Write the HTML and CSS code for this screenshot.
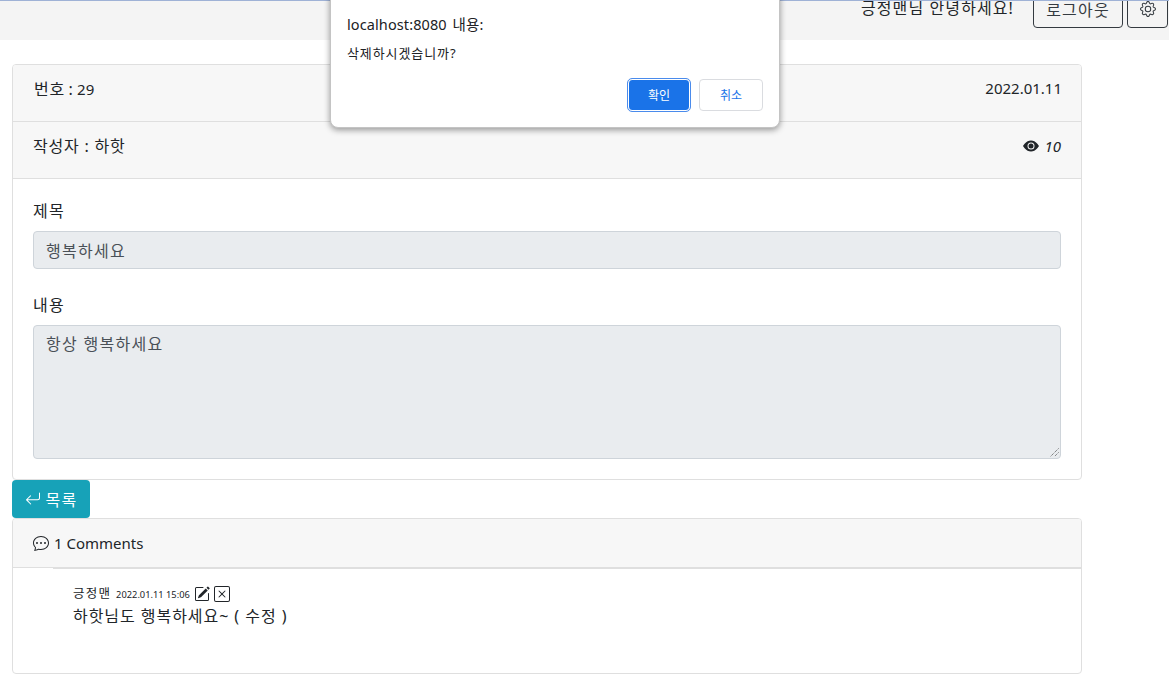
FILE: index.html
```html
<!DOCTYPE html>
<html lang="ko">
<head>
<meta charset="utf-8">
<title>게시글</title>
<link rel="stylesheet" href="styles.css">
</head>
<body>
<header class="topbar">
  <span class="greeting">긍정맨님 안녕하세요!</span>
  <button class="btn-outline logout">로그아웃</button>
  <button class="btn-outline gear">
    <svg class="icon" viewBox="0 0 16 16" width="16" height="16" fill="currentColor"><path d="M8 4.754a3.246 3.246 0 1 0 0 6.492 3.246 3.246 0 0 0 0-6.492zM5.754 8a2.246 2.246 0 1 1 4.492 0 2.246 2.246 0 0 1-4.492 0z"/><path d="M9.796 1.343c-.527-1.79-3.065-1.79-3.592 0l-.094.319a.873.873 0 0 1-1.255.52l-.292-.16c-1.64-.892-3.433.902-2.54 2.541l.159.292a.873.873 0 0 1-.52 1.255l-.319.094c-1.79.527-1.79 3.065 0 3.592l.319.094a.873.873 0 0 1 .52 1.255l-.16.292c-.892 1.64.901 3.434 2.541 2.54l.292-.159a.873.873 0 0 1 1.255.52l.094.319c.527 1.79 3.065 1.79 3.592 0l.094-.319a.873.873 0 0 1 1.255-.52l.292.16c1.64.893 3.434-.902 2.54-2.541l-.159-.292a.873.873 0 0 1 .52-1.255l.319-.094c1.79-.527 1.79-3.065 0-3.592l-.319-.094a.873.873 0 0 1-.52-1.255l.16-.292c.893-1.64-.902-3.433-2.541-2.54l-.292.159a.873.873 0 0 1-1.255-.52l-.094-.319zm-2.633.283c.246-.835 1.428-.835 1.674 0l.094.319a1.873 1.873 0 0 0 2.693 1.115l.291-.16c.764-.415 1.6.42 1.184 1.185l-.159.292a1.873 1.873 0 0 0 1.116 2.692l.318.094c.835.246.835 1.428 0 1.674l-.319.094a1.873 1.873 0 0 0-1.115 2.693l.16.291c.415.764-.42 1.6-1.185 1.184l-.291-.159a1.873 1.873 0 0 0-2.693 1.116l-.094.318c-.246.835-1.428.835-1.674 0l-.094-.319a1.873 1.873 0 0 0-2.692-1.115l-.292.16c-.764.415-1.6-.42-1.184-1.185l.159-.291A1.873 1.873 0 0 0 1.945 8.93l-.319-.094c-.835-.246-.835-1.428 0-1.674l.319-.094A1.873 1.873 0 0 0 3.06 4.377l-.16-.292c-.415-.764.42-1.6 1.185-1.184l.292.159a1.873 1.873 0 0 0 2.692-1.115l.094-.319z"/></svg>
  </button>
</header>

<main class="content">
  <section class="card">
    <div class="card-head">
      <span class="post-no">번호 : <span class="latin">29</span></span>
      <span class="latin date">2022.01.11</span>
    </div>
    <div class="card-head">
      <span>작성자 : 하핫</span>
      <span class="views">
        <svg class="icon" viewBox="0 0 16 16" width="16" height="16" fill="currentColor"><path d="M10.5 8a2.5 2.5 0 1 1-5 0 2.5 2.5 0 0 1 5 0z"/><path d="M0 8s3-5.5 8-5.5S16 8 16 8s-3 5.5-8 5.5S0 8 0 8zm8 3.5a3.5 3.5 0 1 0 0-7 3.5 3.5 0 0 0 0 7z"/></svg>
        <em class="latin">10</em>
      </span>
    </div>
    <div class="card-body">
      <label class="field-label">제목</label>
      <div class="field title-field">행복하세요</div>
      <label class="field-label second">내용</label>
      <div class="field text-field">항상 행복하세요
        <svg class="grip" viewBox="0 0 9 9" width="9" height="9"><path d="M8.5 0.5 0.5 8.5M8.5 4.5 4.5 8.5" stroke="#555" stroke-width="1" stroke-dasharray="1 1" fill="none"/></svg>
      </div>
    </div>
  </section>

  <button class="btn-list">
    <svg class="icon" viewBox="0 0 16 16" width="16" height="16" fill="currentColor"><path fill-rule="evenodd" d="M14.5 1.5a.5.5 0 0 1 .5.5v4.8a2.5 2.5 0 0 1-2.5 2.5H2.707l3.347 3.346a.5.5 0 0 1-.708.708l-4.2-4.2a.5.5 0 0 1 0-.708l4-4a.5.5 0 1 1 .708.708L2.707 8.3H12.5A1.5 1.5 0 0 0 14 6.8V2a.5.5 0 0 1 .5-.5z"/></svg>
    목록
  </button>

  <section class="card comments">
    <div class="comments-head">
      <svg class="icon" viewBox="0 0 16 16" width="16" height="16" fill="currentColor"><path d="M5 8a1 1 0 1 1-2 0 1 1 0 0 1 2 0zm4 0a1 1 0 1 1-2 0 1 1 0 0 1 2 0zm3 1a1 1 0 1 0 0-2 1 1 0 0 0 0 2z"/><path d="m2.165 15.803.02-.004c1.83-.363 2.948-.842 3.468-1.105A9.06 9.06 0 0 0 8 15c4.418 0 8-3.134 8-7s-3.582-7-8-7-8 3.134-8 7c0 1.76.743 3.37 1.97 4.6a10.437 10.437 0 0 1-.524 2.318l-.003.011a10.722 10.722 0 0 1-.244.637c-.079.186.074.394.273.362a21.673 21.673 0 0 0 .693-.125zm.8-3.108a1 1 0 0 0-.287-.801C1.618 10.83 1 9.468 1 8c0-3.192 3.004-6 7-6s7 2.808 7 6c0 3.193-3.004 6-7 6a8.06 8.06 0 0 1-2.088-.272 1 1 0 0 0-.711.074c-.387.196-1.24.57-2.634.893a10.97 10.97 0 0 0 .398-2z"/></svg>
      <span>1 Comments</span>
    </div>
    <div class="comment-list">
      <div class="comment">
        <div class="comment-meta">
          <span class="author">긍정맨</span>
          <span class="stamp">2022.01.11 15:06</span>
          <svg class="icon" viewBox="0 0 16 16" width="16" height="16" fill="currentColor"><path d="M15.502 1.94a.5.5 0 0 1 0 .706L14.459 3.69l-2-2L13.502.646a.5.5 0 0 1 .707 0l1.293 1.293zm-1.75 2.456-2-2L4.939 9.21a.5.5 0 0 0-.121.196l-.805 2.414a.25.25 0 0 0 .316.316l2.414-.805a.5.5 0 0 0 .196-.12l6.813-6.814z"/><path fill-rule="evenodd" d="M1 13.5A1.5 1.5 0 0 0 2.5 15h11a1.5 1.5 0 0 0 1.5-1.5v-6a.5.5 0 0 0-1 0v6a.5.5 0 0 1-.5.5h-11a.5.5 0 0 1-.5-.5v-11a.5.5 0 0 1 .5-.5H9a.5.5 0 0 0 0-1H2.5A1.5 1.5 0 0 0 1 2.5v11z"/></svg>
          <svg class="icon" viewBox="0 0 16 16" width="16" height="16" fill="currentColor"><path d="M14 1a1 1 0 0 1 1 1v12a1 1 0 0 1-1 1H2a1 1 0 0 1-1-1V2a1 1 0 0 1 1-1h12zM2 0a2 2 0 0 0-2 2v12a2 2 0 0 0 2 2h12a2 2 0 0 0 2-2V2a2 2 0 0 0-2-2H2z"/><path d="M4.646 4.646a.5.5 0 0 1 .708 0L8 7.293l2.646-2.647a.5.5 0 0 1 .708.708L8.707 8l2.647 2.646a.5.5 0 0 1-.708.708L8 8.707l-2.646 2.647a.5.5 0 0 1-.708-.708L7.293 8 4.646 5.354a.5.5 0 0 1 0-.708z"/></svg>
        </div>
        <p class="comment-text">하핫님도 행복하세요~ ( 수정 )</p>
      </div>
    </div>
  </section>
</main>

<div class="dialog">
  <p class="dialog-origin">localhost:8080 내용:</p>
  <p class="dialog-message">삭제하시겠습니까?</p>
  <div class="dialog-actions">
    <button class="dialog-ok">확인</button>
    <button class="dialog-cancel">취소</button>
  </div>
</div>
</body>
</html>
```

FILE: styles.css
```css
* { box-sizing: border-box; }
html, body { height: 100%; }
body {
  margin: 0;
  background: #fff;
  color: #212529;
  font-family: "Noto Sans", "Noto Sans CJK KR", sans-serif;
  font-size: 16px;
  line-height: 1.5;
  overflow: hidden;
}
button { font-family: inherit; }
.icon { display: block; flex: none; }
.latin { font-size: 15px; letter-spacing: 0; }
.date { margin-right: -1px; }

.topbar {
  height: 40px;
  background: #f4f4f4;
  border-top: 1px solid #9fb2d6;
  display: flex;
  justify-content: flex-end;
  align-items: flex-end;
  gap: 4px;
  padding: 0 1px 12px 0;
  overflow: hidden;
}
.greeting { margin-right: 15px; margin-bottom: 8px; letter-spacing: 1.1px; }
.btn-outline {
  height: 38px;
  flex: none;
  background: transparent;
  border: 1px solid #343a40;
  border-radius: 4px;
  color: #343a40;
  font-size: 16px;
  display: flex;
  align-items: center;
  justify-content: center;
  padding: 0;
  letter-spacing: 1.2px;
}
.logout { width: 90px; }
.gear { width: 41px; }

.content { width: 1070px; margin: 24px 0 0 12px; }
.card {
  border: 1px solid #dfdfdf;
  border-radius: 4px;
  background: #fff;
}
.card-head {
  height: 57px;
  background: #f7f7f7;
  border-bottom: 1px solid #dfdfdf;
  padding: 12px 20px;
  display: flex;
  justify-content: space-between;
  letter-spacing: .8px;
}
.card-head:first-child { border-radius: 3px 3px 0 0; }
.post-no { margin-left: 1px; word-spacing: -1.5px; }
.views { display: flex; align-items: center; gap: 5px; height: 24px; letter-spacing: 0; }
.card-body { padding: 20px 20px; }
.field-label { display: block; letter-spacing: 1.2px; margin-bottom: 8px; }
.field-label.second { margin-top: 24px; }
.field {
  position: relative;
  background: #e9ecef;
  border: 1px solid #ced4da;
  border-radius: 4px;
  padding: 6px 12px;
  color: #495057;
  letter-spacing: 1.3px;
}
.title-field { height: 38px; padding-top: 7px; }
.text-field { height: 134px; }
.grip { position: absolute; right: 1px; bottom: 1px; }

.btn-list {
  width: 78px;
  height: 38px;
  border: 0;
  border-radius: 4px;
  background: #17a2b8;
  color: #fff;
  font-size: 16px;
  display: flex;
  align-items: center;
  justify-content: center;
  gap: 5px;
  padding: 0;
  letter-spacing: 1.2px;
}
.comments { height: 156px; }
.comments-head {
  height: 49px;
  background: #f7f7f7;
  border-bottom: 1px solid #dfdfdf;
  border-radius: 3px 3px 0 0;
  padding: 0 20px;
  display: flex;
  align-items: center;
  gap: 5px;
  font-size: 15px;
}
.comment-list { padding-left: 40px; }
.comment { border-top: 1px solid #dfdfdf; padding: 15px 0 0 20px; }
.comment-meta { display: flex; align-items: center; gap: 4px; height: 20px; }
.author { font-size: 12.5px; letter-spacing: 1.2px; }
.stamp { font-size: 9.3px; margin-left: 1px; margin-top: 2px; }
.comment-text { margin: 0; font-size: 16px; letter-spacing: .95px; }

.dialog {
  position: absolute;
  left: 330px;
  top: -10px;
  width: 450px;
  height: 138px;
  background: #fff;
  border: 1px solid #c4c4c4;
  border-radius: 8px;
  box-shadow: 0 2px 6px rgba(0,0,0,.4);
  padding: 23px 16px 16px;
  font-size: 14px;
  color: #202124;
}
.dialog-origin { margin: 0; font-size: 14.5px; line-height: 20px; letter-spacing: .1px; word-spacing: 2px; }
.dialog-message { margin: 10px 0 0; font-size: 13px; line-height: 18px; letter-spacing: .9px; }
.dialog-actions {
  display: flex;
  justify-content: flex-end;
  gap: 8px;
  margin-top: 17px;
}
.dialog-ok, .dialog-cancel {
  width: 64px;
  height: 32px;
  border-radius: 4px;
  font-size: 12px;
  padding: 0;
}
.dialog-ok {
  width: 62px;
  margin: 0 1px;
  background: #1a73e8;
  color: #fff;
  border: 1px solid #fff;
  outline: 1.5px solid #4a8bec;
  outline-offset: 0;
}
.dialog-cancel { background: #fff; color: #1a73e8; border: 1px solid #dadce0; }
```
